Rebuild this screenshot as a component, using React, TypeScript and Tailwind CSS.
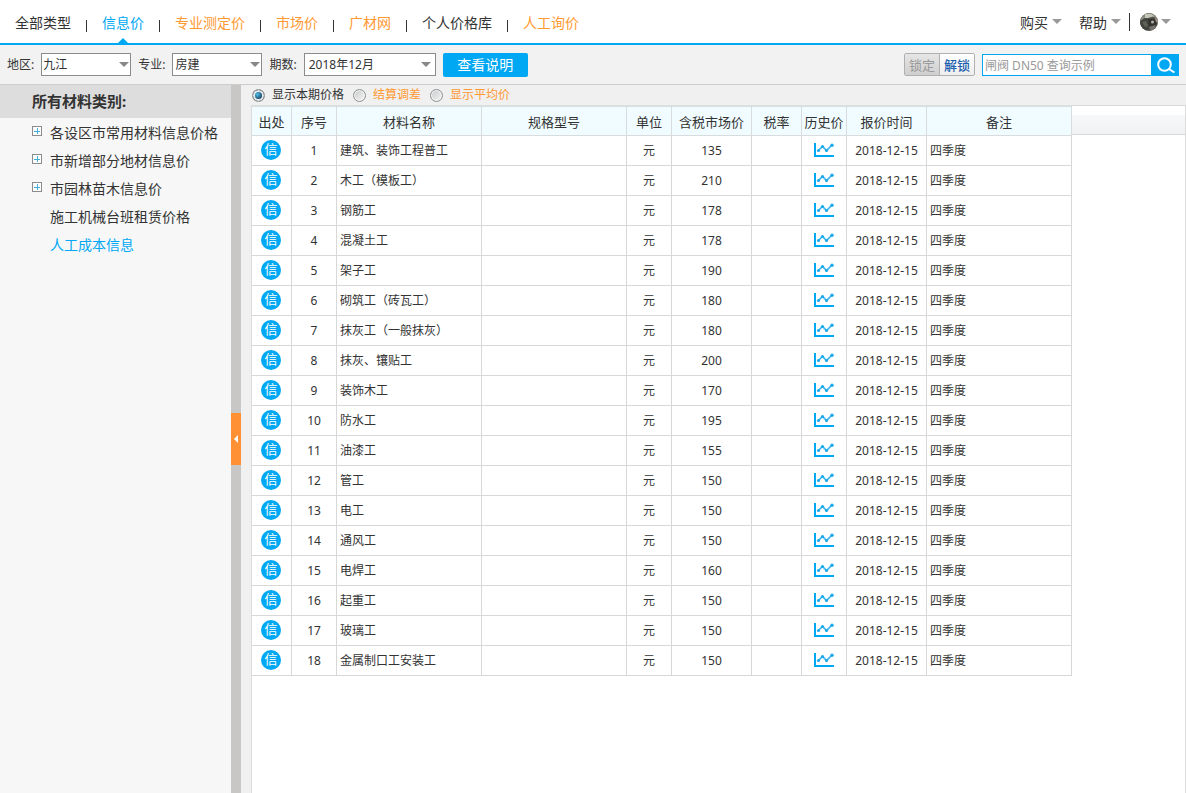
import { useState } from 'react';
import clsx from 'clsx';

const navItems = [
    { label: '全部类型', color: 'text-[#333]' },
    { label: '信息价', color: 'text-[#00a8f3]', active: true },
    { label: '专业测定价', color: 'text-[#ff9933]' },
    { label: '市场价', color: 'text-[#ff9933]' },
    { label: '广材网', color: 'text-[#ff9933]' },
    { label: '个人价格库', color: 'text-[#333]' },
    { label: '人工询价', color: 'text-[#ff9933]' },
];

const categories = [
    { label: '各设区市常用材料信息价格', expandable: true },
    { label: '市新增部分地材信息价', expandable: true },
    { label: '市园林苗木信息价', expandable: true },
    { label: '施工机械台班租赁价格' },
    { label: '人工成本信息', active: true },
];

const priceModes = ['显示本期价格', '结算调差', '显示平均价'];

const columns = [
    { title: '出处', width: 'w-[40px]' },
    { title: '序号', width: 'w-[45px]' },
    { title: '材料名称', width: 'w-[145px]' },
    { title: '规格型号', width: 'w-[145px]' },
    { title: '单位', width: 'w-[45px]' },
    { title: '含税市场价', width: 'w-[80px]' },
    { title: '税率', width: 'w-[50px]' },
    { title: '历史价', width: 'w-[45px]' },
    { title: '报价时间', width: 'w-[80px]' },
    { title: '备注', width: 'w-[145px]' },
];

const rows = [
    { name: '建筑、装饰工程普工', price: 135 },
    { name: '木工（模板工）', price: 210 },
    { name: '钢筋工', price: 178 },
    { name: '混凝土工', price: 178 },
    { name: '架子工', price: 190 },
    { name: '砌筑工（砖瓦工）', price: 180 },
    { name: '抹灰工（一般抹灰）', price: 180 },
    { name: '抹灰、镶贴工', price: 200 },
    { name: '装饰木工', price: 170 },
    { name: '防水工', price: 195 },
    { name: '油漆工', price: 155 },
    { name: '管工', price: 150 },
    { name: '电工', price: 150 },
    { name: '通风工', price: 150 },
    { name: '电焊工', price: 160 },
    { name: '起重工', price: 150 },
    { name: '玻璃工', price: 150 },
    { name: '金属制口工安装工', price: 150 },
];

function Caret({ className }: { className?: string }) {
    return (
        <svg viewBox="0 0 10 5" className={clsx('w-[10px] h-[5px]', className)} aria-hidden="true">
            <path d="M0 0h10L5 5z" fill="currentColor" />
        </svg>
    );
}

function ChartIcon() {
    return (
        <svg viewBox="0 0 20 14" className="w-5 h-[14px]" fill="none" aria-hidden="true">
            <path d="M1 0v13h19" stroke="#00a8f3" strokeWidth="2" />
            <path d="M4.5 7.5l4-4 4 4L18 2" stroke="#3ab4ee" strokeWidth="1.6" />
            <g fill="#1ba9ea">
                <circle cx="4.5" cy="7.5" r="1.6" />
                <circle cx="8.5" cy="3.5" r="1.6" />
                <circle cx="12.5" cy="7.5" r="1.6" />
                <circle cx="18" cy="2.2" r="1.7" />
            </g>
        </svg>
    );
}

function PlusBox() {
    return (
        <svg viewBox="0 0 10 10" className="w-[10px] h-[10px]" fill="none" aria-hidden="true">
            <rect x="0.5" y="0.5" width="9" height="9" fill="#fff" stroke="#8c8c8c" />
            <path d="M2 5.5h6M5.5 2v6" stroke="#45aed6" />
        </svg>
    );
}

function Avatar() {
    return (
        <svg viewBox="0 0 18 18" className="w-[18px] h-[18px]" aria-hidden="true">
            <defs>
                <clipPath id="avatar-clip">
                    <circle cx="9" cy="9" r="9" />
                </clipPath>
            </defs>
            <g clipPath="url(#avatar-clip)">
                <rect width="18" height="18" fill="#4b4a45" />
                <path d="M0 0h18v6l-5-2-7 1-6 5z" fill="#8b8c80" />
                <path d="M5 1l6 0 3 2-6 2-3 0z" fill="#c4c6b8" />
                <path d="M0 8l5-3 4 3 1 6-4 4-6-2z" fill="#41443f" />
                <path d="M2 9l4-1 2 5-3 1z" fill="#5e6358" />
                <path d="M8 6l6 0 3 4-3 4-5-1z" fill="#34322f" />
                <circle cx="12.5" cy="9" r="1.5" fill="#b4b0aa" />
                <path d="M9 14l6-2 1 4-5 2z" fill="#76736d" />
                <path d="M15 5l3 1v4l-2-1z" fill="#9c9388" />
            </g>
        </svg>
    );
}

interface FilterSelectProps {
    id: string;
    label: string;
    value: string;
    className: string;
    caretClassName?: string;
}

function FilterSelect({ id, label, value, className, caretClassName = 'right-[2px]' }: FilterSelectProps) {
    return (
        <div className="flex items-center gap-[7px]">
            <label htmlFor={id} className="pt-px">{label}:</label>
            <div className="relative">
                <select
                    id={id}
                    defaultValue={value}
                    className={clsx('block h-[23px] appearance-none bg-white border border-[#8c8c8c] pr-5 outline-none', className)}
                >
                    <option>{value}</option>
                </select>
                <Caret className={clsx('absolute top-[9px] text-[#888] pointer-events-none', caretClassName)} />
            </div>
        </div>
    );
}

export default function App() {
    const [mode, setMode] = useState(priceModes[0]);

    return (
        <div className="min-h-screen flex flex-col bg-white text-xs text-[#333] font-['Noto_Sans','Noto_Sans_CJK_SC',sans-serif]">
            <header className="h-[45px] flex justify-between border-b-2 border-[#00a8f3] px-[15px] text-sm">
                <nav className="flex">
                    {navItems.map((item, i) => (
                        <div key={item.label} className="flex items-center">
                            {i > 0 && <span className="w-px h-3 mt-2 mx-[15px] bg-[#333]" />}
                            <a href="#" className={clsx('relative h-full flex items-center pt-[2px] whitespace-nowrap', item.color)}>
                                {item.label}
                                {item.active && (
                                    <Caret className="absolute bottom-0 left-1/2 -translate-x-1/2 rotate-180" />
                                )}
                            </a>
                        </div>
                    ))}
                </nav>
                <div className="flex items-center">
                    <button type="button" className="flex items-center gap-1">
                        <span className="pt-[2px]">购买</span>
                        <Caret className="text-[#999]" />
                    </button>
                    <button type="button" className="flex items-center gap-1 ml-[17px]">
                        <span className="pt-[2px]">帮助</span>
                        <Caret className="text-[#999]" />
                    </button>
                    <span className="w-px h-[18px] ml-2 mr-[10px] bg-[#333]" />
                    <button type="button" aria-label="我的账户" className="flex items-center gap-[3px]">
                        <Avatar />
                        <Caret className="text-[#999]" />
                    </button>
                </div>
            </header>

            <div className="h-10 flex items-center justify-between bg-[#f2f2f2] border-b border-[#ccc] px-[7px]">
                <div className="flex items-center gap-[7px]">
                    <FilterSelect id="region" label="地区" value="九江" className="w-[90px] pl-px" />
                    <FilterSelect id="major" label="专业" value="房建" className="w-[90px] pl-[2px]" />
                    <FilterSelect
                        id="period"
                        label="期数"
                        value="2018年12月"
                        className="w-[132px] pl-1"
                        caretClassName="right-[5px]"
                    />
                    <button type="button" className="w-[85px] h-6 rounded-xs bg-[#00a8f3] text-white text-sm leading-6">
                        查看说明
                    </button>
                </div>
                <div className="flex items-center gap-[7px]">
                    <div className="flex h-[23px] rounded-xs border border-[#b0b0b0] overflow-hidden text-[13px] leading-5">
                        <button type="button" className="w-[35px] border-r border-[#b0b0b0] bg-linear-to-b from-[#e6e6e6] to-[#cfcfcf] text-[#999]">
                            锁定
                        </button>
                        <button type="button" className="w-[34px] bg-linear-to-b from-white to-[#eee] text-[#1e5fae] font-medium">
                            解锁
                        </button>
                    </div>
                    <form className="flex h-[22px]" onSubmit={(e) => e.preventDefault()}>
                        <input
                            type="text"
                            aria-label="搜索材料"
                            placeholder="闸阀 DN50 查询示例"
                            className="w-[170px] bg-white border border-[#00a8f3] px-[2px] pt-[2px] outline-none placeholder:text-[#999]"
                        />
                        <button type="submit" aria-label="搜索" className="w-[27px] flex items-center justify-center bg-[#00a8f3]">
                            <svg viewBox="0 0 18 16" className="w-[18px] h-4" fill="none" stroke="#fff" strokeWidth="2" aria-hidden="true">
                                <circle cx="7.5" cy="7.5" r="6.3" />
                                <path d="M12 12l5.5 3.5" />
                            </svg>
                        </button>
                    </form>
                </div>
            </div>

            <div className="flex-1 flex">
                <aside className="w-[231px] shrink-0 bg-[#f7f7f7]">
                    <h2 className="h-[33px] pl-8 bg-[#ddd] text-[15px] leading-8 font-bold">所有材料类别:</h2>
                    <ul className="pt-px text-sm leading-7">
                        {categories.map((item) => (
                            <li key={item.label} className="flex pl-8">
                                <span className="w-[18px] pt-[7px]">{item.expandable && <PlusBox />}</span>
                                <a href="#" className={clsx('whitespace-nowrap', item.active && 'text-[#00a8f3]')}>
                                    {item.label}
                                </a>
                            </li>
                        ))}
                    </ul>
                </aside>

                <div className="w-[10px] shrink-0 flex items-center bg-[#c8c7c5]">
                    <button type="button" aria-label="收起" className="w-full h-[52px] flex items-center justify-center bg-[#ff9033]">
                        <svg viewBox="0 0 4 8" className="w-1 h-2" aria-hidden="true">
                            <path d="M4 0v8L0 4z" fill="#fff" />
                        </svg>
                    </button>
                </div>

                <main className="flex-1 min-w-0 flex flex-col bg-[#f0f0f0] pl-[10px]">
                    <div className="h-5 flex items-center gap-[9px] pl-px">
                        {priceModes.map((item, i) => (
                            <label key={item} className={clsx('flex items-center gap-[7px]', i > 0 && 'text-[#ff9933]')}>
                                <input
                                    type="radio"
                                    name="price-mode"
                                    checked={mode === item}
                                    onChange={() => setMode(item)}
                                    className="appearance-none w-[13px] h-[13px] rounded-full border border-[#8e8f8f] bg-linear-to-br from-[#c8cacc] to-[#f6f6f6] shadow-[inset_0_0_0_1px_#f4f4f4] checked:bg-radial-[at_40%_40%] checked:from-[#4fc3ee] checked:to-[#12334f] checked:to-60% checked:shadow-[inset_0_0_0_2px_#e6e8ea]"
                                />
                                {item}
                            </label>
                        ))}
                    </div>

                    <div className="flex-1 flex items-start bg-white border-x border-[#dcdcdc]">
                        <table className="w-[820px] shrink-0 table-fixed border-separate border-spacing-0 border-t-2 border-[#dadfe0]">
                            <thead>
                                <tr className="h-[29px] bg-[#f0fcff] text-[13px]">
                                    {columns.map((col) => (
                                        <th key={col.title} className={clsx('p-0 pt-px font-normal leading-5 whitespace-nowrap border-r border-b border-[#d8dcdd]', col.width)}>
                                            {col.title}
                                        </th>
                                    ))}
                                </tr>
                            </thead>
                            <tbody className="[&_td]:p-0 [&_td]:border-r [&_td]:border-b [&_td]:border-[#d8d8d8] text-center">
                                {rows.map((row, i) => (
                                    <tr key={row.name} className="h-[30px] leading-5">
                                        <td>
                                            <span className="block w-5 h-5 ml-[9px] mb-px rounded-full bg-[#00a8f3] text-white text-[13px] leading-[19px]">
                                                信
                                            </span>
                                        </td>
                                        <td>{i + 1}</td>
                                        <td className="text-left">
                                            <span className="pl-[3px] whitespace-nowrap">{row.name}</span>
                                        </td>
                                        <td />
                                        <td>元</td>
                                        <td>{row.price}</td>
                                        <td />
                                        <td>
                                            <a href="#" aria-label={`${row.name} 历史价`} className="flex justify-center pb-[2px]">
                                                <ChartIcon />
                                            </a>
                                        </td>
                                        <td>2018-12-15</td>
                                        <td className="text-left">
                                            <span className="pl-[3px]">四季度</span>
                                        </td>
                                    </tr>
                                ))}
                            </tbody>
                        </table>
                        <div className="flex-1 h-[30px] pt-[9px] border-y border-[#d8d8d8]">
                            <div className="h-full bg-linear-to-b from-[#f7f8fa] to-[#f1f2f4]" />
                        </div>
                    </div>
                </main>
            </div>
        </div>
    );
}
